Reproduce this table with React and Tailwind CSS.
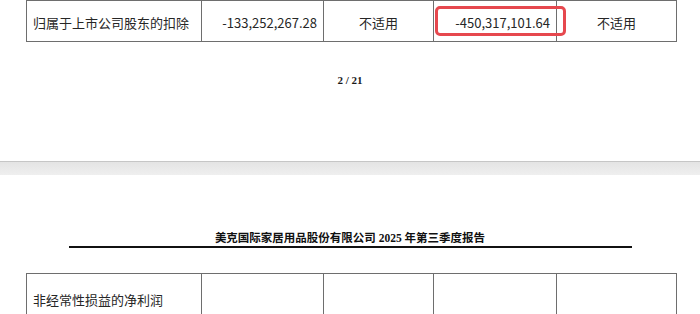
import React from 'react'

const cellFont = { fontFamily: '"Noto Sans CJK SC", "Noto Sans", sans-serif' }
const serifFont = { fontFamily: '"Liberation Serif", "Noto Sans CJK SC", serif' }

// column widths of the profit table, left to right
const cols = [175, 122, 110, 123, 120]

function ReportTable({ children }) {
  return (
    <table className="ml-[26px] w-[650px] table-fixed border-collapse text-[13px] text-[#262626]" style={cellFont}>
      <colgroup>
        {cols.map((w, i) => (
          <col key={i} style={{ width: w }} />
        ))}
      </colgroup>
      <tbody>{children}</tbody>
    </table>
  )
}

export default function App() {
  return (
    <div className="relative h-[314px] w-[700px] overflow-hidden bg-white">
      {/* page 2 bottom */}
      <div className="h-[161px]">
        <ReportTable>
          <tr className="h-[41px]">
            <td className="border border-[#6e6e6e] pl-[6px] pt-[3px] whitespace-nowrap">归属于上市公司股东的扣除</td>
            <td className="border border-[#6e6e6e] pr-[6px] pt-[3px] text-right">-133,252,267.28</td>
            <td className="border border-[#6e6e6e] pt-[3px] text-center">不适用</td>
            <td className="border border-[#6e6e6e] pr-[6px] pt-[3px] text-right">-450,317,101.64</td>
            <td className="border border-[#6e6e6e] pt-[3px] text-center">不适用</td>
          </tr>
        </ReportTable>
        <p className="mt-[31px] text-center text-[11px] font-bold leading-[14px] text-[#1a1a1a]" style={serifFont}>
          2 / 21
        </p>
      </div>

      {/* viewer gap between pages */}
      <div className="h-[14px] border-t border-[#c6c6c6] bg-gradient-to-b from-[#e4e4e4] to-[#efefef]" />

      {/* page 3 top */}
      <div className="pt-[56px]">
        <p className="text-center text-[11.5px] font-bold leading-[14px] text-[#111]" style={serifFont}>
          美克国际家居用品股份有限公司 2025 年第三季度报告
        </p>
        <div className="ml-[69px] mt-[1px] h-[2px] w-[563px] bg-[#111]" />
        <div className="mt-[25px]">
          <ReportTable>
            <tr className="h-[60px]">
              <td className="border border-[#6e6e6e] pl-[6px] pt-[16px] align-top whitespace-nowrap">非经常性损益的净利润</td>
              <td className="border border-[#6e6e6e]" />
              <td className="border border-[#6e6e6e]" />
              <td className="border border-[#6e6e6e]" />
              <td className="border border-[#6e6e6e]" />
            </tr>
          </ReportTable>
        </div>
      </div>

      {/* highlight around the Q3 figure */}
      <div className="absolute left-[435px] top-[6px] h-[30px] w-[131px] rounded-[5px] border-[3px] border-[#e6484e]" />
    </div>
  )
}
